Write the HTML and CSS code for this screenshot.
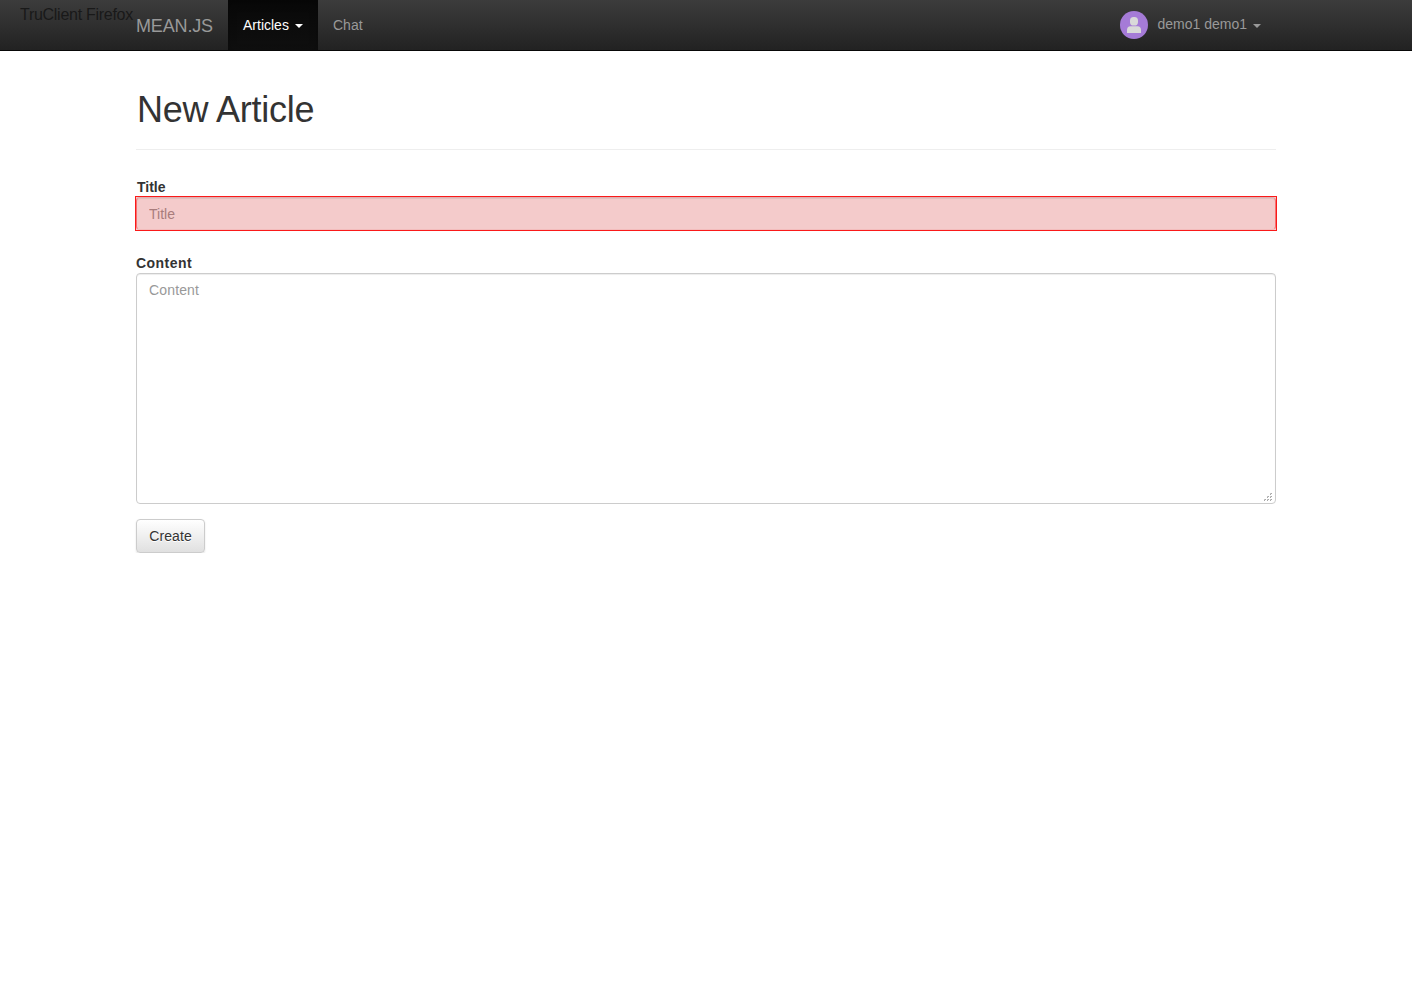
FILE: index.html
```html
<!DOCTYPE html>
<html lang="en">
<head>
<meta charset="utf-8">
<title>MEAN.JS</title>
<link rel="stylesheet" href="styles.css">
</head>
<body>
<header class="navbar">
  <span class="watermark">TruClient Firefox</span>
  <nav class="container nav-row">
    <a class="brand">MEAN.JS</a>
    <a class="nav-item active">Articles <b class="caret"></b></a>
    <a class="nav-item">Chat</a>
    <a class="nav-item user">
      <svg class="avatar" width="28" height="28" viewBox="0 0 28 28"><circle cx="14" cy="14" r="14" fill="#a57bd7"/><rect x="10" y="6" width="8" height="8.500" rx="3.600" fill="#d9d9d9"/><path d="M7 22v-3q0-3.500 3.500-3.800h7q3.500.3 3.500 3.800v3z" fill="#d9d9d9"/></svg>
      <span class="user-name">demo1 demo1</span><b class="caret"></b>
    </a>
  </nav>
</header>
<main class="container">
  <h1 class="page-header">New Article</h1>
  <form class="article-form">
    <label class="label label-title" for="title">Title</label>
    <div class="invalid"><input class="control" id="title" type="text" placeholder="Title"></div>
    <label class="label label-content" for="content">Content</label>
    <div class="area-wrap">
      <textarea class="control area" id="content" placeholder="Content"></textarea>
      <svg class="grip" width="8" height="8" viewBox="0 0 8 8"><path d="M6 0h2v1H6zM3 3h2v1H3zM6 3h2v1H6zM0 6h2v1H0zM3 6h2v1H3zM6 6h2v1H6z" fill="#c4c4c4"/><path d="M7 0h1v1H7zM4 3h1v1H4zM7 3h1v1H7zM1 6h1v1H1zM4 6h1v1H4zM7 6h1v1H7zM6 1h1v1H6zM3 4h1v1H3zM6 4h1v1H6zM0 7h1v1H0zM3 7h1v1H3zM6 7h1v1H6z" fill="#a8a8a8"/></svg>
    </div>
    <button class="btn" type="button">Create</button>
  </form>
</main>
</body>
</html>
```
FILE: styles.css
```css
* { box-sizing: border-box; }
body {
  margin: 0;
  background: #fff;
  color: #333;
  font: 14px/20px "Liberation Sans", Arial, sans-serif;
}
.container { width: 1140px; margin: 0 auto; }
.navbar {
  position: relative;
  height: 51px;
  background: linear-gradient(#3c3c3c, #222);
  border-bottom: 1px solid #080808;
}
.watermark {
  position: absolute;
  left: 20px;
  top: 5px;
  font-size: 16px;
  letter-spacing: -.28px;
  color: #191919;
}
.nav-row { display: flex; height: 50px; }
.brand {
  padding: 16px 15px 0 0;
  width: 92px;
  font-size: 18px;
  line-height: 21px;
  letter-spacing: -.15px;
  color: #999;
  white-space: nowrap;
}
.nav-item {
  display: flex;
  align-items: center;
  padding: 0 15px;
  color: #999;
}
.active {
  width: 90px;
  color: #fff;
  background: linear-gradient(#080808, #0f0f0f);
  box-shadow: inset 0 3px 9px rgba(0, 0, 0, .25);
}
.caret {
  margin-left: 6px;
  margin-top: 1px;
  border-top: 4px solid;
  border-left: 4px solid transparent;
  border-right: 4px solid transparent;
}
.user { margin-left: auto; }
.user-name { margin-left: 9px; margin-top: -2px; }
.page-header {
  margin: 39px 0 27px;
  padding: 0 0 19px 1px;
  border-bottom: 1px solid #eee;
  font-size: 36px;
  font-weight: 400;
  line-height: 40px;
  letter-spacing: -.25px;
}
.article-form { display: flex; flex-direction: column; align-items: stretch; }
.label { font-weight: 700; height: 20px; }
.label-content { margin-top: 22px; letter-spacing: .45px; }
.label-title { padding-left: 1px; }
.control {
  display: block;
  width: 100%;
  height: 34px;
  margin: 0;
  padding: 6px 12px;
  border: 1px solid #ccc;
  border-radius: 4px;
  box-shadow: inset 0 1px 1px rgba(0, 0, 0, .075);
  background: #fff;
  color: #555;
  font: inherit;
}
.control::placeholder { color: #999; opacity: 1; }
.area::placeholder { letter-spacing: .15px; }
.invalid {
  height: 35px;
  margin: -1px -1px 0;
  border: 1px solid #fa1919;
  background: #f4cbcb;
}
.invalid .control {
  height: 33px;
  border-color: #dfb0b0 #f57070 #f3bcbc;
  background: #f4cbcb;
}
.invalid .control::placeholder { color: #a87c7c; }
.area-wrap { position: relative; }
.area { height: 231px; resize: none; }
.grip { position: absolute; right: 4px; bottom: 3px; }
.btn {
  align-self: flex-start;
  width: 69px;
  height: 34px;
  margin-top: 15px;
  padding: 0;
  border: 1px solid #ccc;
  border-radius: 4px;
  background: linear-gradient(#fff, #e0e0e0);
  box-shadow: inset 0 1px 0 rgba(255, 255, 255, .15), 0 1px 2px rgba(0, 0, 0, .12);
  color: #333;
  font: inherit;
  letter-spacing: .1px;
  text-shadow: 0 1px 0 #fff;
}
```
